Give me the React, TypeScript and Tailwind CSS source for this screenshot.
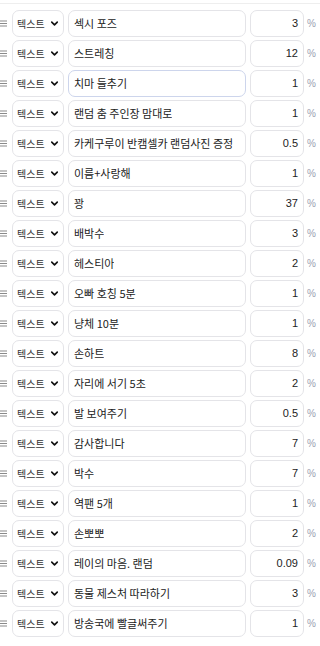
import { ChevronDown } from "lucide-react";

const rows: [string, string][] = [
  ["섹시 포즈", "3"],
  ["스트레칭", "12"],
  ["치마 들추기", "1"],
  ["랜덤 춤 주인장 맘대로", "1"],
  ["카케구루이 반캠셀카 랜덤사진 증정", "0.5"],
  ["이름+사랑해", "1"],
  ["꽝", "37"],
  ["배박수", "3"],
  ["헤스티아", "2"],
  ["오빠 호칭 5분", "1"],
  ["냥체 10분", "1"],
  ["손하트", "8"],
  ["자리에 서기 5초", "2"],
  ["발 보여주기", "0.5"],
  ["감사합니다", "7"],
  ["박수", "7"],
  ["역팬 5개", "1"],
  ["손뽀뽀", "2"],
  ["레이의 마음. 랜덤", "0.09"],
  ["동물 제스처 따라하기", "3"],
  ["방송국에 빨글써주기", "1"],
];

function Handle() {
  return (
    <svg width="7" height="7" viewBox="0 0 7 7" className="shrink-0">
      <rect x="0" y="0.5" width="7" height="1" fill="#8a8a8a" />
      <rect x="0" y="3" width="7" height="1" fill="#8a8a8a" />
      <rect x="0" y="5.5" width="7" height="1" fill="#8a8a8a" />
    </svg>
  );
}

export default function App() {
  return (
    <div className="w-[320px] h-[646px] bg-white overflow-hidden font-['Noto_Sans_CJK_KR',sans-serif] text-[11px] text-[#222]">
      <div className="mt-[3px] border-t border-[#eeeeee]" />
      <div className="flex flex-col gap-[3px] pt-[6px]">
        {rows.map(([label, value], i) => (
          <div key={i} className="flex items-center h-[27px]">
            <Handle />
            <div className="ml-[5px] w-[52px] h-full flex items-center justify-between pl-[4px] pr-[3px] border border-[#e4e4e8] rounded-[7px]">
              <span className="text-[10px] text-[#333]">텍스트</span>
              <ChevronDown size={11} strokeWidth={3.5} className="text-[#111]" />
            </div>
            <div
              className={`ml-[4px] w-[178px] h-full flex items-center px-[5px] border rounded-[7px] ${
                i === 2 ? "border-[#cdd5ec]" : "border-[#e4e4e8]"
              }`}
            >
              <span className="truncate">{label}</span>
            </div>
            <div className="ml-[4px] w-[54px] h-full flex items-center justify-end pr-[5px] border border-[#e4e4e8] rounded-[7px] font-['Liberation_Sans',sans-serif] text-[11px] text-[#222]">
              {value}
            </div>
            <span className="ml-[3px] text-[10px] text-[#9aa0b0] font-['Liberation_Sans',sans-serif]">%</span>
          </div>
        ))}
      </div>
    </div>
  );
}
